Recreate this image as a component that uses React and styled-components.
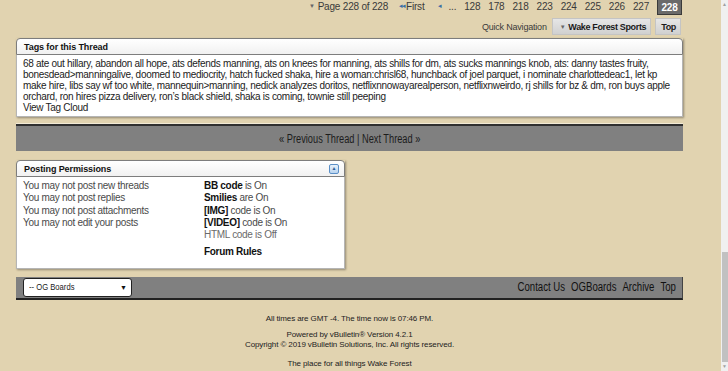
import styled, { createGlobalStyle } from 'styled-components';

const GlobalStyle = createGlobalStyle`
  html, body {
    margin: 0;
    padding: 0;
    background: #e1d3b0;
    overflow: hidden;
  }
  body {
    font-family: Tahoma, "Liberation Sans", Arial, sans-serif;
    font-size: 10px;
    color: #3e3e3e;
  }
`;

const Page = styled.div`
  display: flex;
  height: 371px;
`;

const Main = styled.div`
  flex: 1;
  padding-left: 16px;
`;

const Wrap = styled.div`
  width: 667px;
`;

const Scrollbar = styled.div`
  width: 7px;
  background: #f0f0f0;
  display: flex;
  flex-direction: column;
`;

const ScrollArrow = styled.div`
  height: 9px;
  display: flex;
  align-items: center;
  justify-content: center;
  font-size: 5px;
  color: #a0a0a0;
  line-height: 1;
`;

const ScrollTrack = styled.div`
  flex: 1;
  display: flex;
  flex-direction: column;
  justify-content: flex-end;
`;

const ScrollThumb = styled.div`
  height: 110px;
  background: #c1c1c1;
  margin: 0 0 0 1px;
`;

const Squeeze = styled.span`
  display: inline-block;
  transform: scaleX(${(p) => p.$x});
  transform-origin: ${(p) => p.$origin || 'center'} center;
`;

const PageNav = styled.div`
  display: flex;
  justify-content: flex-end;
  align-items: center;
  gap: 8px;
  margin-top: -3px;
  height: 18px;
  padding-right: 1px;
  font-size: 10px;
  letter-spacing: -0.2px;
  color: #3a3a3a;
`;

const Caret = styled.span`
  font-size: 6px;
  color: #666;
  margin-right: ${(p) => p.$space || 3}px;
`;

const NavItem = styled.span`
  margin-left: ${(p) => p.$gap || 0}px;
  display: inline-flex;
  align-items: center;
`;

const NavArrow = styled.span`
  font-size: 7px;
  color: #3a6ea5;
  margin-right: 1px;
  letter-spacing: -1px;
`;

const CurrentPage = styled.span`
  background: #6a6a6a;
  color: #fff;
  font-weight: bold;
  border: 1px solid #3a3a3a;
  padding: 3px 3px 0;
  height: 17px;
  width: 25px;
  justify-content: center;
  box-sizing: border-box;
  display: inline-flex;
  align-items: center;
  margin-left: 0;
`;

const QuickRow = styled.div`
  display: flex;
  justify-content: flex-end;
  align-items: center;
  gap: 4px;
  height: 17px;
  margin-top: 3px;
  padding-right: 2px;
`;

const QuickLabel = styled.span`
  font-size: 9px;
  letter-spacing: -0.2px;
  color: #3a3a3a;
  margin-right: 1px;
`;

const NavButton = styled.span`
  display: inline-flex;
  align-items: center;
  height: 17px;
  padding: 0 4px 0 ${(p) => p.$left || 5}px;
  box-sizing: border-box;
  background: linear-gradient(#e6e6e6, #d0d0d0);
  border: 1px solid #c4c4c4;
  font-weight: bold;
  font-size: 9px;
  letter-spacing: -0.35px;
  color: #1a1a1a;
`;

const Block = styled.div`
  width: ${(p) => p.$width || '667px'};
  box-sizing: border-box;
  margin-top: ${(p) => p.$top || 0}px;
  box-shadow: 1px 1px 2px rgba(0, 0, 0, 0.35);
`;

const BlockHead = styled.div`
  display: flex;
  justify-content: space-between;
  align-items: center;
  height: 17px;
  box-sizing: border-box;
  padding: 0 5px 0 7px;
  background: linear-gradient(#ffffff, #f1f1f1);
  border: 1px solid #7d7d7d;
  border-radius: 4px 4px 0 0;
  font-weight: bold;
  font-size: 9px;
  letter-spacing: -0.1px;
  color: #111;
`;

const BlockBody = styled.div`
  background: #fff;
  border: 1px solid #b5b5b5;
  border-top: none;
  padding: ${(p) => p.$pad || '2px 6px 2px'};
  font-size: 10px;
  letter-spacing: -0.3px;
  line-height: 11px;
  color: #222;
`;

const CollapseIcon = styled.span`
  width: 10px;
  height: 10px;
  box-sizing: border-box;
  border: 1px solid #5b8fc7;
  border-radius: 2px;
  background: linear-gradient(#e8f1fb, #b8d3ef);
  display: flex;
  align-items: center;
  justify-content: center;
  font-size: 5px;
  color: #2f5f97;
  line-height: 1;
`;

const ThreadNav = styled.div`
  margin-top: 7px;
  height: 27px;
  box-sizing: border-box;
  background: #808080;
  border-top: 2px solid #303030;
  box-shadow: 0 -1px 0 #f2ead6;
  display: flex;
  justify-content: center;
  align-items: center;
  font-size: 12px;
  color: #1c1c1c;
`;

const PermGrid = styled.div`
  display: grid;
  grid-template-columns: 181px 1fr;
`;

const PermList = styled.div`
  display: flex;
  flex-direction: column;
  line-height: 12.3px;
  letter-spacing: -0.3px;
`;

const PermItem = styled.span`
  margin-top: ${(p) => p.$top || 0}px;
  color: ${(p) => (p.$dim ? '#6a6a6a' : '#4a4a4a')};
  b {
    color: #111;
  }
`;

const Footer = styled.div`
  margin-top: 8px;
  height: 23px;
  box-sizing: border-box;
  background: #808080;
  border-bottom: 2px solid #222;
  border-right: 1px solid #444;
  display: flex;
  justify-content: space-between;
  align-items: center;
  padding: 0 6px 0 7px;
`;

const Select = styled.div`
  width: 109px;
  height: 19px;
  box-sizing: border-box;
  background: #fff;
  border: 1px solid #222;
  border-radius: 3px;
  display: flex;
  justify-content: space-between;
  align-items: center;
  padding: 0 4px 0 5px;
  font-size: 9px;
  color: #222;
`;

const SelectArrow = styled.span`
  font-size: 7px;
  color: #111;
`;

const FooterLinks = styled.div`
  display: flex;
  gap: 7.5px;
  font-size: 12px;
  color: #111;
  transform: scaleX(0.8);
  transform-origin: right center;
`;

const Credits = styled.div`
  text-align: center;
  font-size: 8px;
  letter-spacing: -0.1px;
  color: #222;
  padding-top: 14px;
  line-height: 10px;
`;

const CreditLine = styled.div`
  margin-top: ${(p) => p.$top || 0}px;
`;

const tags =
  "68 ate out hillary, abandon all hope, ats defends manning, ats on knees for manning, ats shills for dm, ats sucks mannings knob, ats: danny tastes fruity, bonesdead>manningalive, doomed to mediocrity, hatch fucked shaka, hire a woman:chrisl68, hunchback of joel parquet, i nominate charlottedeac1, let kp make hire, libs say wf too white, mannequin>manning, nedick analyzes doritos, netflixnnowayarealperson, netflixnweirdo, rj shills for bz & dm, ron buys apple orchard, ron hires pizza delivery, ron\u2019s black shield, shaka is coming, townie still peeping";

const pages = ['128', '178', '218', '223', '224', '225', '226', '227'];

export default function App() {
  return (
    <>
      <GlobalStyle />
      <Page>
        <Main>
          <Wrap>
            <PageNav>
              <NavItem>
                <Caret>▼</Caret>Page 228 of 228
              </NavItem>
              <NavItem $gap={3}>
                <NavArrow>◂◂</NavArrow>First
              </NavItem>
              <NavItem $gap={5}>
                <NavArrow>◂</NavArrow>
              </NavItem>
              <NavItem $gap={-1}>...</NavItem>
              {pages.map((p) => (
                <NavItem key={p}>{p}</NavItem>
              ))}
              <CurrentPage>228</CurrentPage>
            </PageNav>

            <QuickRow>
              <QuickLabel>Quick Navigation</QuickLabel>
              <NavButton $left={7}>
                <Caret $space={3}>▼</Caret>Wake Forest Sports
              </NavButton>
              <NavButton>Top</NavButton>
            </QuickRow>

            <Block $top={3}>
              <BlockHead>Tags for this Thread</BlockHead>
              <BlockBody $pad="3px 5px 3px 6px">
                {tags}
                <br />
                View Tag Cloud
              </BlockBody>
            </Block>

            <ThreadNav>
              <Squeeze $x={0.77}>« Previous Thread | Next Thread »</Squeeze>
            </ThreadNav>

            <Block $top={9} $width="329px">
              <BlockHead>
                Posting Permissions
                <CollapseIcon>▲</CollapseIcon>
              </BlockHead>
              <BlockBody $pad="3px 6px 9px">
                <PermGrid>
                  <PermList>
                    <PermItem>You may not post new threads</PermItem>
                    <PermItem>You may not post replies</PermItem>
                    <PermItem>You may not post attachments</PermItem>
                    <PermItem>You may not edit your posts</PermItem>
                  </PermList>
                  <PermList>
                    <PermItem>
                      <b>BB code</b> is On
                    </PermItem>
                    <PermItem>
                      <b>Smilies</b> are On
                    </PermItem>
                    <PermItem>
                      <b>[IMG]</b> code is On
                    </PermItem>
                    <PermItem>
                      <b>[VIDEO]</b> code is On
                    </PermItem>
                    <PermItem $dim>HTML code is Off</PermItem>
                    <PermItem $top={5}>
                      <b>Forum Rules</b>
                    </PermItem>
                  </PermList>
                </PermGrid>
              </BlockBody>
            </Block>

            <Footer>
              <Select>
                <Squeeze $x={0.85} $origin="left">-- OG Boards</Squeeze>
                <SelectArrow>▼</SelectArrow>
              </Select>
              <FooterLinks>
                <span>Contact Us</span>
                <span>OGBoards</span>
                <span>Archive</span>
                <span>Top</span>
              </FooterLinks>
            </Footer>

            <Credits>
              <CreditLine>All times are GMT -4. The time now is 07:46 PM.</CreditLine>
              <CreditLine $top={6}>Powered by vBulletin® Version 4.2.1</CreditLine>
              <CreditLine>Copyright © 2019 vBulletin Solutions, Inc. All rights reserved.</CreditLine>
              <CreditLine $top={9}>The place for all things Wake Forest</CreditLine>
            </Credits>
          </Wrap>
        </Main>
        <Scrollbar>
          <ScrollArrow>▲</ScrollArrow>
          <ScrollTrack>
            <ScrollThumb />
          </ScrollTrack>
          <ScrollArrow>▼</ScrollArrow>
        </Scrollbar>
      </Page>
    </>
  );
}
